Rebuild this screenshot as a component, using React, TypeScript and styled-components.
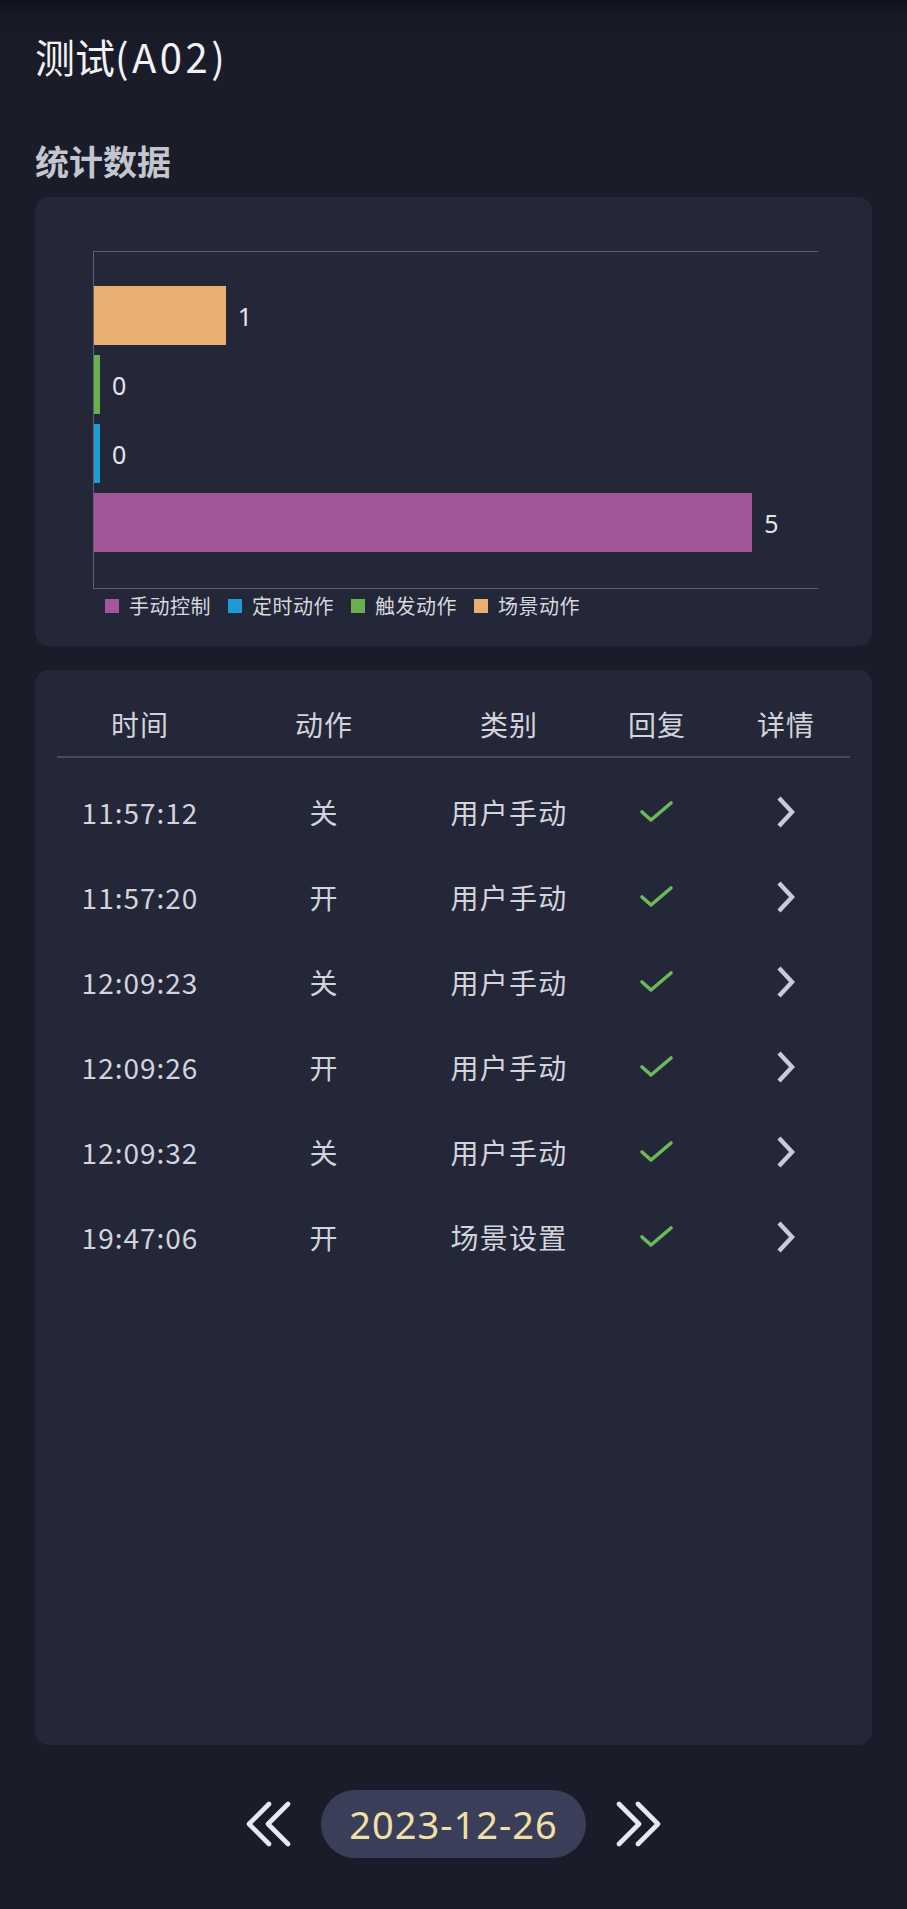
import React from "react";
import styled, { createGlobalStyle } from "styled-components";

const Global = createGlobalStyle`
  html, body {
    margin: 0;
    padding: 0;
    background: #1a1c29;
  }
  body {
    min-height: 1909px;
    font-family: "Noto Sans CJK SC", "Noto Sans", sans-serif;
    color: #d4d6df;
  }
  * { box-sizing: border-box; }
`;

const Page = styled.div`
  min-height: 1909px;
  padding: 32px 35px 0;
  background: linear-gradient(180deg, #0f111c 0px, #171925 18px, #1a1c29 60px, #1a1c29 100%);
`;

const Title = styled.h1`
  margin: 0;
  font-size: 40px;
  line-height: 48px;
  font-weight: 400;
  color: #f2f2f6;
`;

const TitleLatin = styled.span`
  letter-spacing: 3.5px;
`;

const SectionTitle = styled.h2`
  margin: 61px 0 0;
  font-size: 34px;
  line-height: 40px;
  font-weight: 700;
  color: #c4c6cf;
`;

const Card = styled.section<{ $mt: number; $h: number }>`
  margin-top: ${(p) => p.$mt}px;
  height: ${(p) => p.$h}px;
  background: #242738;
  border-radius: 14px;
`;

const ChartWrap = styled.div`
  padding: 54px 54px 0 58px;
`;

const Plot = styled.div`
  height: 338px;
  border-top: 1.5px solid #5e6173;
  border-bottom: 1.5px solid #5e6173;
  border-left: 1.5px solid #5e6173;
  padding: 34px 0;
  display: flex;
  flex-direction: column;
  gap: 10px;
`;

const BarRow = styled.div`
  height: 59px;
  display: flex;
  align-items: center;
  gap: 12px;
`;

const Bar = styled.div<{ $color: string }>`
  height: 100%;
  min-width: 6px;
  background: ${(p) => p.$color};
`;

const BarValue = styled.span`
  font-size: 25px;
  color: #e4e4ea;
  font-family: "Noto Sans", sans-serif;
`;

const Legend = styled.div`
  display: flex;
  align-items: center;
  gap: 17px;
  padding-left: 12px;
  margin-top: 5px;
`;

const LegendItem = styled.div`
  display: flex;
  align-items: center;
  gap: 10px;
  font-size: 20px;
  line-height: 24px;
  letter-spacing: 0.5px;
  color: #d6d7df;
`;

const Swatch = styled.span<{ $color: string }>`
  width: 14px;
  height: 14px;
  background: ${(p) => p.$color};
`;

const Table = styled.div`
  padding: 0 22px;
`;

const Grid = styled.div`
  display: grid;
  grid-template-columns: 166px 202px 168px 128px 130px;
  align-items: center;
  justify-items: center;
`;

const HeaderRow = styled(Grid)`
  padding: 34px 0 12px;
  border-bottom: 2px solid #474a5d;
  font-size: 28px;
  line-height: 40px;
  letter-spacing: 1px;
  color: #d2d3dc;
`;

const Body = styled.div`
  padding-top: 11px;
`;

const Row = styled(Grid)`
  height: 85px;
  font-size: 28px;
  letter-spacing: 1.2px;
  color: #d2d4dd;
`;

const Time = styled.span`
  font-size: 28px;
  letter-spacing: 1px;
`;

const Pager = styled.div`
  margin-top: 45px;
  display: flex;
  justify-content: center;
  align-items: center;
  gap: 30px;
`;

const DatePill = styled.div`
  width: 265px;
  height: 68px;
  border-radius: 34px;
  background: #3b3e58;
  display: flex;
  align-items: center;
  justify-content: center;
  font-family: "Noto Sans", sans-serif;
  font-size: 38px;
  color: #f1e0a6;
  letter-spacing: 1px;
`;

const IconBtn = styled.button`
  background: none;
  border: none;
  padding: 0;
  width: 46px;
  height: 46px;
  display: flex;
  cursor: pointer;
`;

const Check = () => (
  <svg width="36" height="26" viewBox="0 0 36 26">
    <path d="M3 13 L12 21 L32 4" fill="none" stroke="#6cb95a" strokeWidth="3.6" strokeLinecap="round" strokeLinejoin="round" />
  </svg>
);

const Chevron = () => (
  <svg width="22" height="34" viewBox="0 0 22 34">
    <path d="M4 3 L17 17 L4 31" fill="none" stroke="#c9cbd6" strokeWidth="4.4" strokeLinejoin="miter" />
  </svg>
);

const DoubleLeft = () => (
  <svg width="46" height="46" viewBox="0 0 46 46">
    <g fill="none" stroke="#e8e8ef" strokeWidth="4.6" strokeLinecap="round" strokeLinejoin="round">
      <path d="M24 3 L4 23 L24 43" />
      <path d="M43 3 L23 23 L43 43" />
    </g>
  </svg>
);

const DoubleRight = () => (
  <svg width="46" height="46" viewBox="0 0 46 46">
    <g fill="none" stroke="#e8e8ef" strokeWidth="4.6" strokeLinecap="round" strokeLinejoin="round">
      <path d="M22 3 L42 23 L22 43" />
      <path d="M3 3 L23 23 L3 43" />
    </g>
  </svg>
);

const bars = [
  { value: 1, color: "#e9ae72" },
  { value: 0, color: "#6ab04f" },
  { value: 0, color: "#1c9bd7" },
  { value: 5, color: "#a2579b" },
];

const legend = [
  { label: "手动控制", color: "#a2579b" },
  { label: "定时动作", color: "#1c9bd7" },
  { label: "触发动作", color: "#6ab04f" },
  { label: "场景动作", color: "#e9ae72" },
];

const rows = [
  { t: "11:57:12", a: "关", c: "用户手动" },
  { t: "11:57:20", a: "开", c: "用户手动" },
  { t: "12:09:23", a: "关", c: "用户手动" },
  { t: "12:09:26", a: "开", c: "用户手动" },
  { t: "12:09:32", a: "关", c: "用户手动" },
  { t: "19:47:06", a: "开", c: "场景设置" },
];

const MAX = 5.5;

export default function App() {
  return (
    <>
      <Global />
      <Page>
        <Title>
          测试<TitleLatin>(A02)</TitleLatin>
        </Title>
        <SectionTitle>统计数据</SectionTitle>
        <Card $mt={16} $h={449}>
          <ChartWrap>
            <Plot>
              {bars.map((b, i) => (
                <BarRow key={i}>
                  <Bar $color={b.color} style={{ width: `${(b.value / MAX) * 100}%` }} />
                  <BarValue>{b.value}</BarValue>
                </BarRow>
              ))}
            </Plot>
            <Legend>
              {legend.map((l) => (
                <LegendItem key={l.label}>
                  <Swatch $color={l.color} />
                  {l.label}
                </LegendItem>
              ))}
            </Legend>
          </ChartWrap>
        </Card>
        <Card $mt={24} $h={1075}>
          <Table>
            <HeaderRow>
              <span>时间</span>
              <span>动作</span>
              <span>类别</span>
              <span>回复</span>
              <span>详情</span>
            </HeaderRow>
            <Body>
              {rows.map((r) => (
                <Row key={r.t}>
                  <Time>{r.t}</Time>
                  <span>{r.a}</span>
                  <span>{r.c}</span>
                  <Check />
                  <Chevron />
                </Row>
              ))}
            </Body>
          </Table>
        </Card>
        <Pager>
          <IconBtn aria-label="previous day"><DoubleLeft /></IconBtn>
          <DatePill>2023-12-26</DatePill>
          <IconBtn aria-label="next day"><DoubleRight /></IconBtn>
        </Pager>
      </Page>
    </>
  );
}
